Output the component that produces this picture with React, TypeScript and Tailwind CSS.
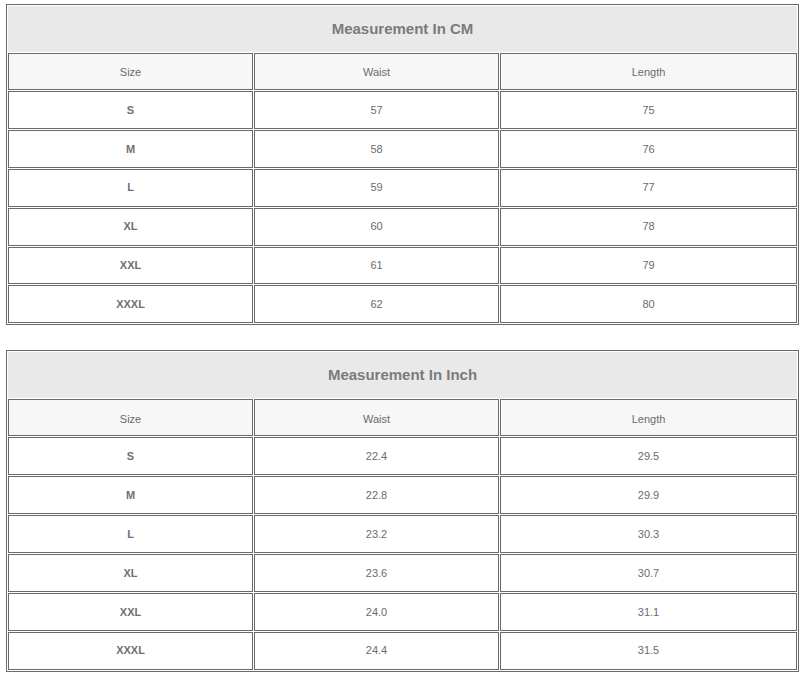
const rows = [
  { size: "S", cm: ["57", "75"], inch: ["22.4", "29.5"] },
  { size: "M", cm: ["58", "76"], inch: ["22.8", "29.9"] },
  { size: "L", cm: ["59", "77"], inch: ["23.2", "30.3"] },
  { size: "XL", cm: ["60", "78"], inch: ["23.6", "30.7"] },
  { size: "XXL", cm: ["61", "79"], inch: ["24.0", "31.1"] },
  { size: "XXXL", cm: ["62", "80"], inch: ["24.4", "31.5"] },
];

const cell = "border border-[#6a6a6a] text-center align-middle p-0";

function SizeTable({ title, unit }: { title: string; unit: "cm" | "inch" }) {
  return (
    <table className="w-[793px] table-fixed border-separate border-spacing-[1px] border border-[#6a6a6a] text-[11px] text-[#6b6b6b]">
      <colgroup>
        <col className="w-[245px]" />
        <col className="w-[245px]" />
        <col />
      </colgroup>
      <tbody>
        <tr className="h-[46px]">
          <td
            colSpan={3}
            className="border border-[#ececec] bg-[#e9e9e9] text-center align-middle text-[15px] font-bold text-[#7b7b7b]"
          >
            {title}
          </td>
        </tr>
        <tr className="h-[37px] bg-[#f7f7f7]">
          <td className={`${cell} pt-[2px]`}>Size</td>
          <td className={`${cell} pt-[2px]`}>Waist</td>
          <td className={`${cell} pt-[2px]`}>Length</td>
        </tr>
        {rows.map((r) => (
          <tr key={r.size} className="h-[37.9px] bg-white">
            <td className={`${cell} font-bold text-[#707070]`}>{r.size}</td>
            <td className={cell}>{r[unit][0]}</td>
            <td className={cell}>{r[unit][1]}</td>
          </tr>
        ))}
      </tbody>
    </table>
  );
}

export default function App() {
  return (
    <div
      className="flex min-h-[677px] flex-col gap-[25px] bg-white pl-[6px] pt-[4px]"
      style={{ fontFamily: '"Liberation Sans", Arial, sans-serif' }}
    >
      <SizeTable title="Measurement In CM" unit="cm" />
      <SizeTable title="Measurement In Inch" unit="inch" />
    </div>
  );
}
